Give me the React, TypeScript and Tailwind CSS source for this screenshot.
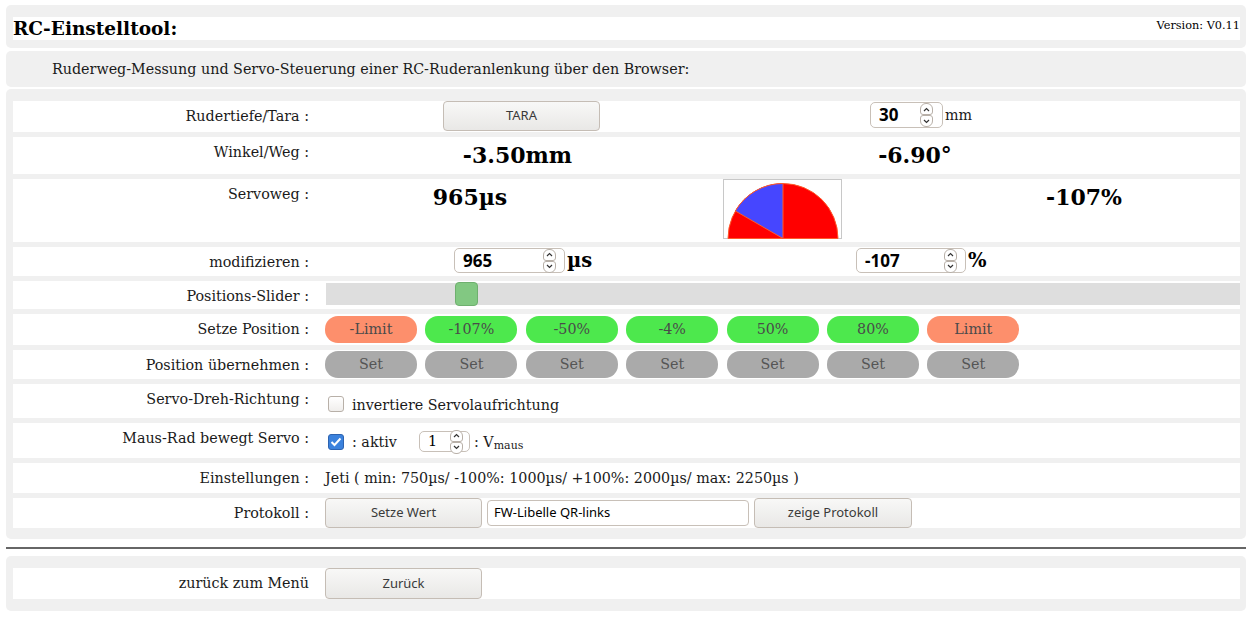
import React from "react";

const serif = "font-['DejaVu_Serif',serif]";
const sans = "font-['Noto_Sans',sans-serif]";

function Spinner() {
  return (
    <div className="flex flex-col gap-0">
      <div className="flex h-[12px] w-[13px] items-center justify-center rounded-t-[6px] rounded-b-[3px] border border-[#b8b0a8] bg-white">
        <svg width="7" height="5" viewBox="0 0 7 5"><path d="M1 4 L3.5 1.5 L6 4" fill="none" stroke="#333" strokeWidth="1.2" /></svg>
      </div>
      <div className="flex h-[12px] w-[13px] items-center justify-center rounded-b-[6px] rounded-t-[3px] border border-[#b8b0a8] bg-white">
        <svg width="7" height="5" viewBox="0 0 7 5"><path d="M1 1 L3.5 3.5 L6 1" fill="none" stroke="#333" strokeWidth="1.2" /></svg>
      </div>
    </div>
  );
}

function NumInput({ value, w, h, bold = true, pr }: { value: string; w: string; h: string; bold?: boolean; pr: string }) {
  return (
    <div className={`flex items-center justify-between rounded-[5px] border border-[#c8c0b8] bg-white pl-[8px] ${w} ${h} ${pr}`}>
      <span className={bold ? `${sans} text-[17px] font-bold text-black` : `${serif} text-[14.3px] text-black`}>{value}</span>
      <Spinner />
    </div>
  );
}

function Btn({ label, w, h }: { label: string; w: string; h: string }) {
  return (
    <div className={`flex shrink-0 items-center justify-center rounded-[4px] border border-[#c5bdb5] bg-gradient-to-b from-[#f8f8f7] to-[#e9e8e6] text-[13px] text-[#3a3a3a] ${sans} ${w} ${h}`}>
      {label}
    </div>
  );
}

function Row({ label, h, children }: { label: string; h: string; children?: React.ReactNode }) {
  return (
    <div className={`flex bg-white ${h}`}>
      <div className="w-[312px] shrink-0 pr-[16px] pt-[5px] text-right leading-[20px]">{label}</div>
      <div className="flex flex-1 items-start">{children}</div>
    </div>
  );
}

function Pie() {
  const cx = 60, cy = 59.5, r = 55;
  const a = (150 * Math.PI) / 180;
  const bx = cx + r * Math.cos(a);
  const by = cy - r * Math.sin(a);
  return (
    <svg width="119" height="60" viewBox="0 0 119 60" className="block">
      <rect x="0.5" y="0.5" width="118" height="59" fill="white" stroke="#c8c8c8" />
      <path d={`M ${cx - r} ${cy} A ${r} ${r} 0 0 1 ${cx + r} ${cy} Z`} fill="#ff0000" stroke="#ff5a2a" strokeWidth="1" />
      <path d={`M ${cx} ${cy} L ${cx} ${cy - r} A ${r} ${r} 0 0 0 ${bx} ${by} Z`} fill="#4646ff" stroke="#ff5a2a" strokeWidth="1" />
    </svg>
  );
}

const big = "pt-[5px] text-center text-[22px] font-bold leading-[26px] text-black";

export default function App() {
  const pillsSet = ["-Limit", "-107%", "-50%", "-4%", "50%", "80%", "Limit"];
  return (
    <div className={`min-h-[620px] w-[1252px] bg-white pt-[5px] text-[14.3px] text-[#1a1a1a] ${serif}`}>
      {/* Title panel */}
      <div className="mx-[6px] rounded-[5px] bg-[#f0f0f0] pb-[8px] pl-[7px] pr-[6px] pt-[12px]">
        <div className="flex h-[23px] items-start justify-between bg-white">
          <div className="text-[18.5px] font-bold leading-[23px] text-black">RC-Einstelltool:</div>
          <div className="pt-[2px] text-[11.3px] leading-[14px] text-black">Version: V0.11</div>
        </div>
      </div>

      {/* Subtitle */}
      <div className="mx-[6px] mt-[3px] flex h-[36px] items-center rounded-[5px] bg-[#f0f0f0] pl-[46px] pt-[2px]">
        Ruderweg-Messung und Servo-Steuerung einer RC-Ruderanlenkung über den Browser:
      </div>

      {/* Main panel */}
      <div className="mx-[6px] mt-[2px] flex flex-col gap-[5px] rounded-[5px] bg-[#f0f0f0] pb-[11px] pl-[7px] pr-[6px] pt-[12px]">
        <Row label="Rudertiefe/Tara :" h="h-[31px]">
          <div className="ml-[118px]"><Btn label="TARA" w="w-[157px]" h="h-[30px]" /></div>
          <div className="ml-[270px] flex items-center">
            <NumInput value="30" w="w-[73px]" h="h-[26px]" pr="pr-[9px]" />
            <span className="ml-[2px] leading-[28px]">mm</span>
          </div>
        </Row>

        <Row label="Winkel/Weg :" h="h-[37px]">
          <div className={`w-[385px] ${big}`}>-3.50mm</div>
          <div className={`w-[410px] ${big}`}>-6.90°</div>
        </Row>

        <Row label="Servoweg :" h="h-[63px]">
          <div className={`w-[290px] ${big}`}>965µs</div>
          <div className="ml-[108px]"><Pie /></div>
          <div className={`ml-[142px] w-[200px] ${big}`}>-107%</div>
        </Row>

        <Row label="modifizieren :" h="h-[29px]">
          <div className="flex w-[531px] items-center pl-[129px] pt-[1px]">
            <NumInput value="965" w="w-[111px]" h="h-[25px]" pr="pr-[8px]" />
            <span className="ml-[2px] text-[19.5px] font-bold leading-[24px] text-black">µs</span>
          </div>
          <div className="flex items-center pt-[1px]">
            <NumInput value="-107" w="w-[110px]" h="h-[25px]" pr="pr-[8px]" />
            <span className="ml-[2px] text-[19.5px] font-bold leading-[24px] text-black">%</span>
          </div>
        </Row>

        <Row label="Positions-Slider :" h="h-[28px]">
          <div className="relative ml-[1px] mt-[2px] h-[22px] flex-1 bg-[#dedede]">
            <div className="absolute left-[129px] top-[-1px] h-[24px] w-[23px] rounded-[4px] border border-[#6fb06f] bg-[#82c882]" />
          </div>
        </Row>

        <Row label="Setze Position :" h="h-[31px]">
          <div className="mt-[2px] flex gap-[8.4px]">
            {pillsSet.map((p, i) => (
              <div
                key={p}
                className={`flex h-[27px] w-[92px] items-center justify-center rounded-[13px] text-[14.3px] text-[#4a4a4a] ${i === 0 || i === 6 ? "bg-[#fd8f6c]" : "bg-[#4de84d]"}`}
              >
                {p}
              </div>
            ))}
          </div>
        </Row>

        <Row label="Position übernehmen :" h="h-[29px]">
          <div className="mt-[1px] flex gap-[8.4px]">
            {pillsSet.map((p) => (
              <div key={p} className="flex h-[27px] w-[92px] items-center justify-center rounded-[13px] bg-[#aaaaaa] text-[14.3px] text-[#555]">
                Set
              </div>
            ))}
          </div>
        </Row>

        <Row label="Servo-Dreh-Richtung :" h="h-[34px]">
          <div className="flex items-center pt-[9px]">
            <div className="ml-[3px] h-[16px] w-[16px] rounded-[3px] border border-[#b8b0a8] bg-gradient-to-b from-white to-[#f0eeec]" />
            <span className="ml-[8px] pt-[2px] leading-[20px] text-[#1a1a1a]">invertiere Servolaufrichtung</span>
          </div>
        </Row>

        <Row label="Maus-Rad bewegt Servo :" h="h-[35px]">
          <div className="flex items-center pt-[8px]">
            <div className="ml-[3px] flex h-[16px] w-[16px] items-center justify-center rounded-[3px] border border-[#2d63b0] bg-[#3b82dd]">
              <svg width="12" height="10" viewBox="0 0 12 10"><path d="M1.5 5 L4.5 8 L10.5 1.5" fill="none" stroke="white" strokeWidth="2" /></svg>
            </div>
            <span className="ml-[8px] leading-[20px]">: aktiv</span>
            <div className="ml-[22px]"><NumInput value="1" w="w-[51px]" h="h-[21px]" bold={false} pr="pr-[6px]" /></div>
            <span className="ml-[4px] leading-[20px]">
              : V<sub className="text-[11px]">maus</sub>
            </span>
          </div>
        </Row>

        <Row label="Einstellungen :" h="h-[30px]">
          <div className="pt-[5px] leading-[20px]">Jeti ( min: 750µs/ -100%: 1000µs/ +100%: 2000µs/ max: 2250µs )</div>
        </Row>

        <Row label="Protokoll :" h="h-[30px]">
          <Btn label="Setze Wert" w="w-[157px]" h="h-[30px]" />
          <div className={`ml-[5px] mt-[2px] flex h-[26px] w-[262px] items-center rounded-[4px] border border-[#c8c0b8] bg-white pl-[6px] text-[13px] text-black ${sans}`}>
            FW-Libelle QR-links
          </div>
          <div className="ml-[5px]"><Btn label="zeige Protokoll" w="w-[158px]" h="h-[30px]" /></div>
        </Row>
      </div>

      <div className="mx-[6px] mt-[8px] h-[2px] bg-[#666]" />

      <div className="mx-[6px] mt-[7px] rounded-[5px] bg-[#f0f0f0] pb-[12px] pl-[7px] pr-[6px] pt-[12px]">
        <Row label="zurück zum Menü" h="h-[31px]">
          <Btn label="Zurück" w="w-[157px]" h="h-[31px]" />
        </Row>
      </div>
    </div>
  );
}
